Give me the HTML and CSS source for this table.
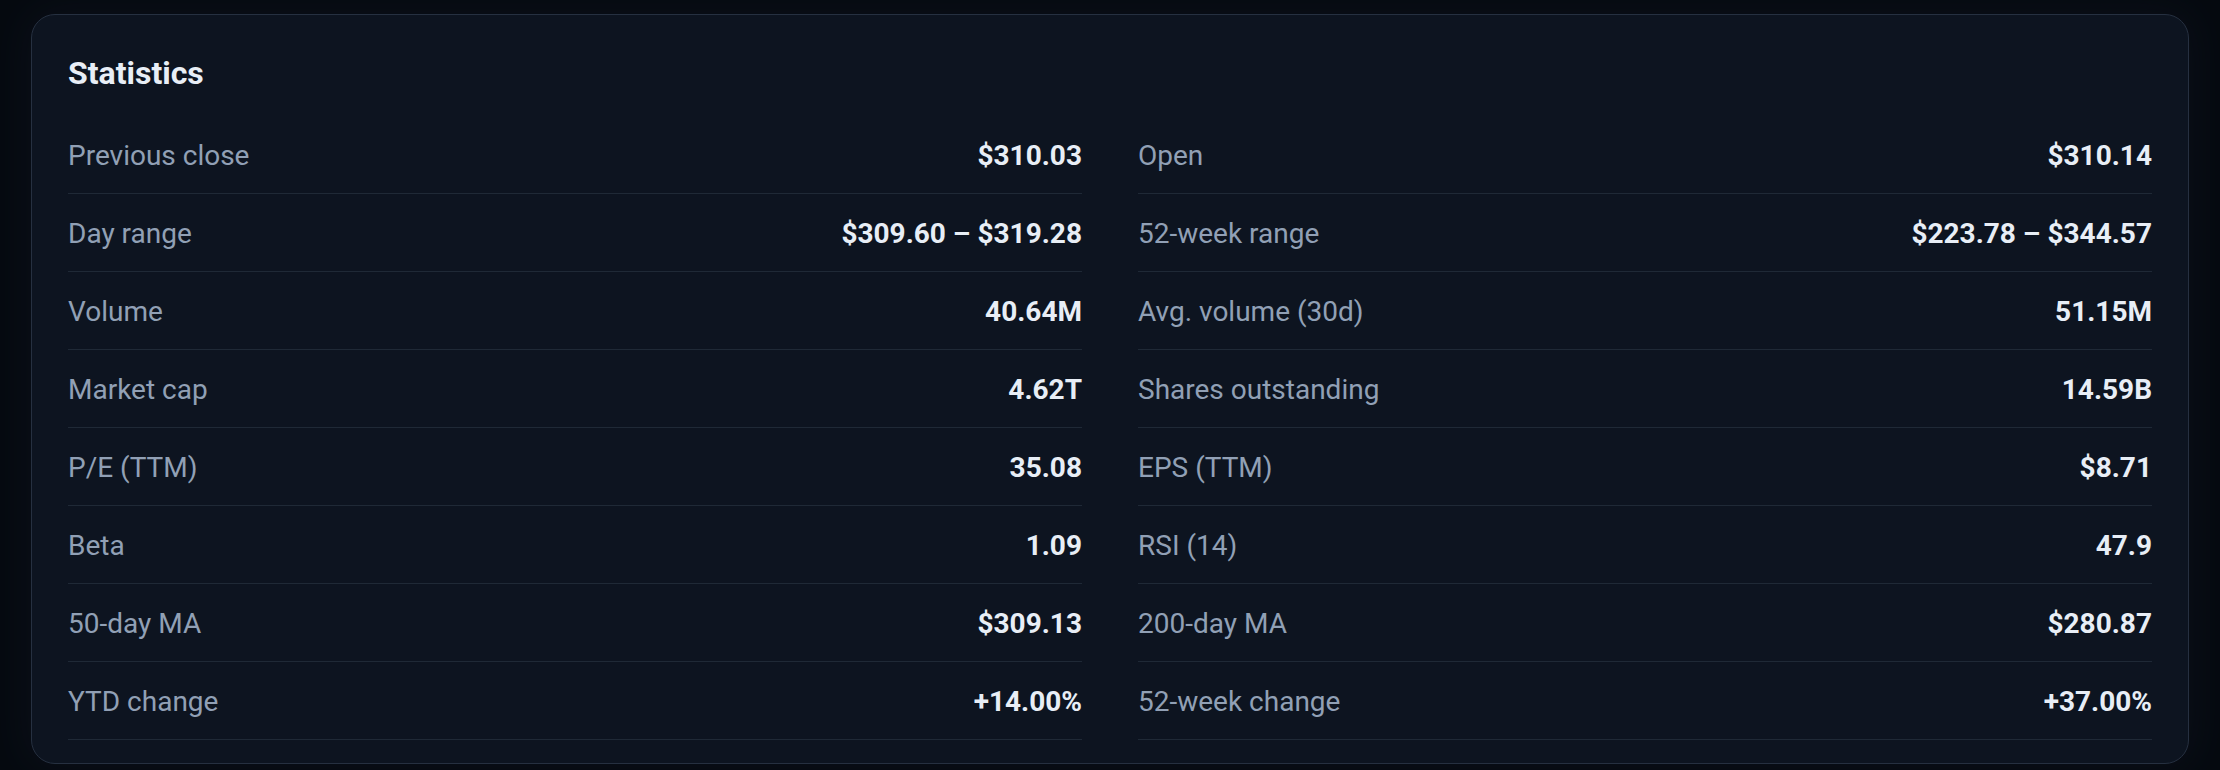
FILE: index.html
```html
<!DOCTYPE html>
<html lang="en">
<head>
<meta charset="utf-8">
<title>Statistics</title>
<link rel="stylesheet" href="styles.css">
</head>
<body>
<section class="card">
  <h2 class="title">Statistics</h2>
  <div class="grid">
    <div class="row"><span class="label">Previous close</span><span class="value">$310.03</span></div>
    <div class="row"><span class="label">Open</span><span class="value">$310.14</span></div>
    <div class="row"><span class="label">Day range</span><span class="value">$309.60 – $319.28</span></div>
    <div class="row"><span class="label">52-week range</span><span class="value">$223.78 – $344.57</span></div>
    <div class="row"><span class="label">Volume</span><span class="value">40.64M</span></div>
    <div class="row"><span class="label">Avg. volume (30d)</span><span class="value">51.15M</span></div>
    <div class="row"><span class="label">Market cap</span><span class="value">4.62T</span></div>
    <div class="row"><span class="label">Shares outstanding</span><span class="value">14.59B</span></div>
    <div class="row"><span class="label">P/E (TTM)</span><span class="value">35.08</span></div>
    <div class="row"><span class="label">EPS (TTM)</span><span class="value">$8.71</span></div>
    <div class="row"><span class="label">Beta</span><span class="value">1.09</span></div>
    <div class="row"><span class="label">RSI (14)</span><span class="value">47.9</span></div>
    <div class="row"><span class="label">50-day MA</span><span class="value">$309.13</span></div>
    <div class="row"><span class="label">200-day MA</span><span class="value">$280.87</span></div>
    <div class="row"><span class="label">YTD change</span><span class="value">+14.00%</span></div>
    <div class="row"><span class="label">52-week change</span><span class="value">+37.00%</span></div>
  </div>
</section>
</body>
</html>
```
FILE: styles.css
```css
html, body {
  margin: 0;
  height: 100%;
}
body {
  background: #060a10;
  padding: 14px 31px 6px 31px;
  box-sizing: border-box;
  font-family: Roboto, "Liberation Sans", sans-serif;
  color: #e8eef6;
}
.card {
  box-sizing: border-box;
  width: 2158px;
  height: 750px;
  background: #0d1420;
  border: 1px solid #263040;
  border-radius: 24px;
  padding: 38px 36px 23px 36px;
  box-shadow: 0 0 40px rgba(20, 30, 45, 0.35);
}
.title {
  margin: 0 0 23px 0;
  font-size: 32px;
  line-height: 40px;
  font-weight: 700;
  color: #e8eef6;
}
.grid {
  display: grid;
  grid-template-columns: 1fr 1fr;
  column-gap: 56px;
}
.row {
  display: flex;
  justify-content: space-between;
  align-items: center;
  box-sizing: border-box;
  height: 78px;
  padding-top: 2px;
  border-bottom: 1px solid #1f2936;
}
.label {
  font-size: 28px;
  font-weight: 400;
  color: #91a0b5;
}
.value {
  font-size: 28px;
  font-weight: 700;
  color: #e8eef6;
}
```
